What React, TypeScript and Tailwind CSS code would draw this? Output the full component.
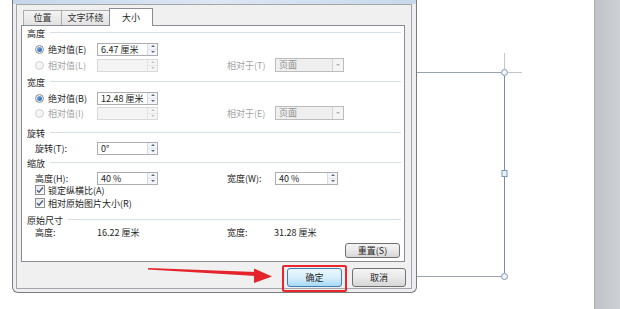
import clsx from 'clsx';

const font = "font-['Noto_Sans_CJK_SC','Noto_Sans',sans-serif]";

function Spinner({ disabled }: { disabled?: boolean }) {
  const tri = disabled ? 'border-[#c4c4c4]' : 'border-[#5a6b80]';
  return (
    <div
      className={clsx(
        'w-[10px] flex flex-col border-l',
        disabled ? 'border-[#e2e2e2] bg-[#f6f6f6]' : 'border-[#d8dce2] bg-[#f3f5f8]'
      )}
    >
      <div className="flex-1 flex items-center justify-center border-b border-[#e2e5ea]">
        <span className={clsx('w-0 h-0 border-x-[2px] border-x-transparent border-b-[2px]', tri)} />
      </div>
      <div className="flex-1 flex items-center justify-center">
        <span className={clsx('w-0 h-0 border-x-[2px] border-x-transparent border-t-[2px]', tri)} />
      </div>
    </div>
  );
}

function SpinInput({
  value,
  className,
  disabled,
}: {
  value?: string;
  className: string;
  disabled?: boolean;
}) {
  return (
    <div
      className={clsx(
        'flex h-[13px] border',
        disabled ? 'border-[#d9d9d9] bg-[#f4f4f4]' : 'border-[#abadb3] bg-white',
        className
      )}
    >
      <div className="flex-1 pl-[3px] leading-[11px] text-[9px] text-[#222]">{value}</div>
      <Spinner disabled={disabled} />
    </div>
  );
}

function Dropdown() {
  return (
    <div className="flex h-[14px] w-[69px] border border-[#bcbcbc] bg-[#efefef]">
      <div className="flex-1 pl-[3px] leading-[12px] text-[9px] text-[#8d8d8d]">页面</div>
      <div className="w-[11px] flex items-center justify-center border-l border-[#d3d3d3] bg-[#f4f4f4]">
        <span className="w-0 h-0 border-x-[2px] border-x-transparent border-t-[2px] border-t-[#b0b0b0]" />
      </div>
    </div>
  );
}

function Radio({ checked }: { checked?: boolean }) {
  return (
    <span
      className={clsx(
        'w-[9px] h-[9px] rounded-full border flex items-center justify-center shrink-0',
        checked ? 'border-[#8b8f96] bg-[#f0f2f5]' : 'border-[#d0d0d0] bg-[#f5f5f5]'
      )}
    >
      {checked && (
        <span className="w-[5px] h-[5px] rounded-full bg-gradient-to-br from-[#7fb3ea] to-[#1c5ca8]" />
      )}
    </span>
  );
}

function Checkbox() {
  return (
    <span className="w-[10px] h-[10px] border border-[#8e8f8f] bg-gradient-to-br from-[#e6e6e6] to-white flex items-center justify-center shrink-0">
      <svg width="8" height="8" viewBox="0 0 8 8">
        <path d="M1 4.2 L3 6.3 L7 1.5" fill="none" stroke="#4a5d87" strokeWidth="1.4" />
      </svg>
    </span>
  );
}

function Header({ label, className }: { label: string; className: string }) {
  return (
    <div className={clsx('flex items-center h-[12px] pr-[3px]', className)}>
      <span className="text-[9px] text-[#1e1e1e] leading-none">{label}</span>
      <div className="flex-1 ml-[5px] h-[2px] border-t border-[#d5dfe5] border-b border-b-white" />
    </div>
  );
}

function Row({ className, children }: { className: string; children: React.ReactNode }) {
  return <div className={clsx('flex items-center h-[12px] pl-[8px] text-[9px] leading-none', className)}>{children}</div>;
}

function Tab({ label, active, className }: { label: string; active?: boolean; className: string }) {
  return (
    <div
      className={clsx(
        'flex items-center justify-center text-[9px] border border-b-0',
        active
          ? 'relative z-10 h-[18px] -mb-px bg-white border-[#898c95] text-[#1e1e1e] pt-[1px]'
          : 'h-[15px] bg-gradient-to-b from-[#f3f3f3] to-[#e2e2e2] border-[#acacac] text-[#333]',
        className
      )}
    >
      {label}
    </div>
  );
}

function Button({ label, primary, className }: { label: string; primary?: boolean; className: string }) {
  return (
    <div
      className={clsx(
        'flex items-center justify-center rounded-[3px] border text-[9px] text-[#1e1e1e]',
        primary
          ? 'border-[#3c7fb1] bg-gradient-to-b from-[#eaf6fd] via-[#d9f0fc] to-[#a7d9f5]'
          : 'border-[#707070] bg-gradient-to-b from-[#f4f4f4] via-[#e9e9e9] to-[#d6d6d6]',
        className
      )}
    >
      {label}
    </div>
  );
}

export default function App() {
  return (
    <div className={clsx('relative w-[620px] h-[309px] overflow-hidden flex bg-white', font)}>
      <div className="flex-1 bg-white" />
      <div className="w-[26px] border-l border-[#a9acb1] bg-gradient-to-r from-[#bfc2c6] to-[#cdd0d4]" />

      {/* shape selection on the page */}
      <svg className="absolute left-0 top-0" width="620" height="309" viewBox="0 0 620 309">
        <line x1="417" y1="72.5" x2="501" y2="72.5" stroke="#9aa3ad" />
        <line x1="504.5" y1="53" x2="504.5" y2="69" stroke="#c3c7cc" />
        <line x1="508" y1="72.5" x2="522" y2="72.5" stroke="#c3c7cc" />
        <line x1="504.5" y1="76" x2="504.5" y2="273" stroke="#7d8aa5" />
        <line x1="417" y1="276.5" x2="501" y2="276.5" stroke="#9aa3ad" />
        <circle cx="504.5" cy="72.5" r="3" fill="#eef4fa" stroke="#8797ad" />
        <circle cx="504.5" cy="276.5" r="3" fill="#eef4fa" stroke="#8797ad" />
        <rect x="502" y="170.5" width="5" height="6" fill="#e8f0fa" stroke="#7d97c0" />
      </svg>

      {/* dialog */}
      <div className="absolute left-[12px] top-0 w-[405px] h-[293px] rounded-b-[6px] border-x border-b border-[#7b7b7b] bg-[#eceef1] pb-[3px] flex flex-col">
        <div className="h-[4px] bg-gradient-to-r from-[#c6d7ea] via-[#dce7f3] to-[#c9d9eb]" />
        <div className="flex-1 ml-[3px] mr-[4px] border border-[#a5a5a5] bg-[#f0f0f0] pl-[4px] pr-[6px] pt-[3px] flex flex-col">
          <div className="flex items-end pl-[2px] h-[17px]">
            <Tab label="位置" className="w-[39px]" />
            <Tab label="文字环绕" className="w-[49px] -ml-px" />
            <Tab label="大小" active className="w-[44px] -ml-px" />
          </div>

          <div className="h-[237px] border border-[#898c95] bg-white pl-[5px] pt-[1px] flex flex-col text-[#1e1e1e]">
            <Header label="高度" className="" />
            <Row className="mt-[4px]">
              <Radio checked />
              <span className="ml-[4px] w-[49px]">绝对值(E)</span>
              <SpinInput value="6.47 厘米" className="w-[61px]" />
            </Row>
            <Row className="mt-[4px] text-[#a3a3a3]">
              <Radio />
              <span className="ml-[4px] w-[49px]">相对值(L)</span>
              <SpinInput disabled className="w-[61px]" />
              <span className="ml-[69px] w-[48px]">相对于(T)</span>
              <Dropdown />
            </Row>

            <Header label="宽度" className="mt-[5px]" />
            <Row className="mt-[4px]">
              <Radio checked />
              <span className="ml-[4px] w-[49px]">绝对值(B)</span>
              <SpinInput value="12.48 厘米" className="w-[61px]" />
            </Row>
            <Row className="mt-[3px] text-[#a3a3a3]">
              <Radio />
              <span className="ml-[4px] w-[49px]">相对值(I)</span>
              <SpinInput disabled className="w-[61px]" />
              <span className="ml-[69px] w-[48px]">相对于(E)</span>
              <Dropdown />
            </Row>

            <Header label="旋转" className="mt-[8px]" />
            <Row className="mt-[3px]">
              <span className="w-[62px]">旋转(T):</span>
              <SpinInput value="0°" className="w-[61px]" />
            </Row>

            <Header label="缩放" className="mt-[3px]" />
            <Row className="mt-[3px]">
              <span className="w-[62px]">高度(H):</span>
              <SpinInput value="40 %" className="w-[61px]" />
              <span className="ml-[69px] w-[48px]">宽度(W):</span>
              <SpinInput value="40 %" className="w-[63px]" />
            </Row>
            <Row className="">
              <Checkbox />
              <span className="ml-[3px]">锁定纵横比(A)</span>
            </Row>
            <Row className="mt-[1px]">
              <Checkbox />
              <span className="ml-[3px]">相对原始图片大小(R)</span>
            </Row>

            <Header label="原始尺寸" className="mt-[5px]" />
            <Row className="">
              <span className="w-[62px]">高度:</span>
              <span className="w-[130px]">16.22 厘米</span>
              <span className="w-[47px]">宽度:</span>
              <span>31.28 厘米</span>
            </Row>
            <div className="flex justify-end pr-[4px] mt-[5px]">
              <Button label="重置(S)" className="w-[55px] h-[15px]" />
            </div>
          </div>

          <div className="flex justify-end gap-[10px] pt-[6px] -mr-px">
            <Button label="确定" primary className="w-[55px] h-[19px]" />
            <Button label="取消" className="w-[54px] h-[19px]" />
          </div>
        </div>
      </div>

      {/* annotation: red arrow and highlight box */}
      <svg className="absolute left-0 top-0 pointer-events-none" width="620" height="309" viewBox="0 0 620 309">
        <polygon points="148,268 256,272 256,276 148,269.5" fill="#e4242a" />
        <polygon points="254,268.5 272,276.5 254,283" fill="#e4242a" />
      </svg>
      <div className="absolute left-[282px] top-[265px] w-[65px] h-[27px] border-2 border-[#e8262b] rounded-[2px]" />
    </div>
  );
}
